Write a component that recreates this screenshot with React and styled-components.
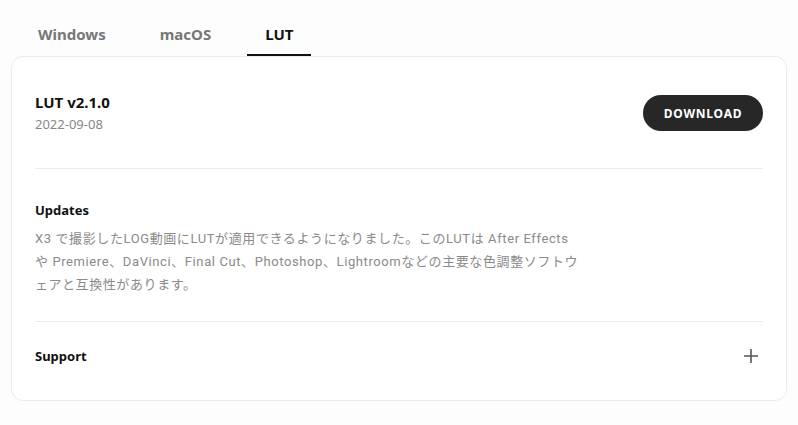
import React, { useState } from 'react';
import styled, { createGlobalStyle } from 'styled-components';

const GlobalStyle = createGlobalStyle`
  body {
    margin: 0;
    background: #fdfdfd;
    font-family: "Noto Sans", "Noto Sans CJK JP", sans-serif;
  }
`;

const Page = styled.div`
  padding: 20px 11px 0;
  width: 776px;
`;

const Tabs = styled.div`
  display: flex;
  padding-left: 9px;
`;

const Tab = styled.button`
  border: none;
  background: none;
  padding: 0 18px 7px;
  height: 36px;
  margin-right: ${p => p.gap}px;
  font-family: inherit;
  font-size: 15px;
  font-weight: 700;
  color: ${p => (p.active ? '#111' : '#777')};
  border-bottom: 2px solid ${p => (p.active ? '#111' : 'transparent')};
  cursor: pointer;
`;

const Card = styled.div`
  background: #fff;
  border: 1px solid #ebebeb;
  border-radius: 12px;
  padding: 0 23px;
`;

const Header = styled.div`
  display: flex;
  justify-content: space-between;
  align-items: center;
  padding: 35px 0 34px;
  border-bottom: 1px solid #ececec;
`;

const Title = styled.h2`
  margin: 0;
  font-size: 15px;
  font-weight: 700;
  color: #111;
  line-height: 20px;
`;

const Date = styled.div`
  font-size: 13px;
  color: #888;
  line-height: 20px;
  margin-top: 2px;
`;

const DownloadButton = styled.button`
  width: 120px;
  height: 36px;
  border: none;
  border-radius: 18px;
  background: #272727;
  color: #fff;
  font-family: inherit;
  font-size: 12px;
  font-weight: 700;
  letter-spacing: 0.8px;
  cursor: pointer;
`;

const Section = styled.div`
  padding: 32px 0 25px;
  border-bottom: 1px solid #ececec;
`;

const SectionTitle = styled.h3`
  margin: 0 0 8px;
  font-size: 13px;
  font-weight: 700;
  color: #111;
  line-height: 18px;
`;

const Text = styled.p`
  margin: 0;
  max-width: 548px;
  font-family: Roboto, "Noto Sans CJK JP", sans-serif;
  font-size: 13px;
  line-height: 23px;
  letter-spacing: 0.6px;
  color: #8a8a8a;
`;

const Accordion = styled.div`
  display: flex;
  justify-content: space-between;
  align-items: center;
  padding: 25px 0 35px;
  cursor: pointer;

  ${SectionTitle} {
    margin: 0;
  }
`;

const PlusIcon = () => (
  <svg width="14" height="14" viewBox="0 0 14 14" style={{ marginRight: 5 }}>
    <path d="M7 0v14M0 7h14" stroke="#555" strokeWidth="1.6" fill="none" />
  </svg>
);

const tabs = [
  { label: 'Windows', gap: 18 },
  { label: 'macOS', gap: 18 },
  { label: 'LUT', gap: 0 },
];

export default function App() {
  const [active, setActive] = useState('LUT');
  return (
    <Page>
      <GlobalStyle />
      <Tabs>
        {tabs.map(t => (
          <Tab key={t.label} gap={t.gap} active={active === t.label} onClick={() => setActive(t.label)}>
            {t.label}
          </Tab>
        ))}
      </Tabs>
      <Card>
        <Header>
          <div>
            <Title>LUT v2.1.0</Title>
            <Date>2022-09-08</Date>
          </div>
          <DownloadButton>DOWNLOAD</DownloadButton>
        </Header>
        <Section>
          <SectionTitle>Updates</SectionTitle>
          <Text>
            X3 で撮影したLOG動画にLUTが適用できるようになりました。このLUTは After Effects や Premiere、DaVinci、Final Cut、Photoshop、Lightroomなどの主要な色調整ソフトウェアと互換性があります。
          </Text>
        </Section>
        <Accordion>
          <SectionTitle as="span">Support</SectionTitle>
          <PlusIcon />
        </Accordion>
      </Card>
    </Page>
  );
}
